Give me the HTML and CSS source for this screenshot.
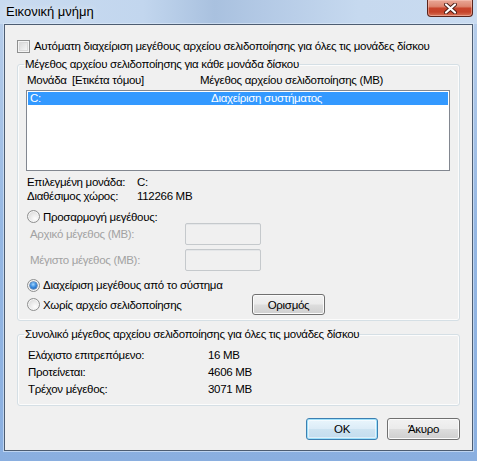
FILE: index.html
```html
<!DOCTYPE html>
<html lang="el">
<head>
<meta charset="utf-8">
<title>Εικονική μνήμη</title>
<link rel="stylesheet" href="styles.css">
</head>
<body>
<div class="window">
  <div class="titlebar">
    <span class="title">Εικονική μνήμη</span>
    <span class="close" aria-label="Κλείσιμο">
      <svg width="13" height="11" viewBox="0 0 13 11">
        <path d="M2 1.5 L11 9.5 M11 1.5 L2 9.5" stroke="#4a1c14" stroke-width="4" stroke-linecap="round" fill="none"/>
        <path d="M2 1.5 L11 9.5 M11 1.5 L2 9.5" stroke="#ffffff" stroke-width="2.2" stroke-linecap="round" fill="none"/>
      </svg>
    </span>
  </div>
  <div class="client">
    <div class="check-row"><span class="checkbox"></span><span>Αυτόματη διαχείριση μεγέθους αρχείου σελιδοποίησης για όλες τις μονάδες δίσκου</span></div>

    <fieldset class="group group-drives">
      <legend>Μέγεθος αρχείου σελιδοποίησης για κάθε μονάδα δίσκου</legend>
      <div class="list-header">
        <span class="col-drive">Μονάδα</span><span class="col-label">[Ετικέτα τόμου]</span><span>Μέγεθος αρχείου σελιδοποίησης (MB)</span>
      </div>
      <div class="listbox">
        <div class="list-row selected"><span class="cell-drive">C:</span><span>Διαχείριση συστήματος</span></div>
      </div>
      <div class="info-row info-first"><span class="info-key">Επιλεγμένη μονάδα:</span><span>C:</span></div>
      <div class="info-row"><span class="info-key">Διαθέσιμος χώρος:</span><span>112266 MB</span></div>

      <div class="radio-row radio-custom"><span class="radio"></span><span>Προσαρμογή μεγέθους:</span></div>
      <div class="size-row size-initial"><span class="size-label disabled">Αρχικό μέγεθος (MB):</span><span class="textbox"></span></div>
      <div class="size-row size-max"><span class="size-label disabled">Μέγιστο μέγεθος (MB):</span><span class="textbox"></span></div>

      <div class="radio-row radio-system"><span class="radio checked"><span class="dot"></span></span><span>Διαχείριση μεγέθους από το σύστημα</span></div>
      <div class="radio-row radio-none">
        <div class="radio-label"><span class="radio"></span><span>Χωρίς αρχείο σελιδοποίησης</span></div>
        <span class="btn btn-set">Ορισμός</span>
      </div>
    </fieldset>

    <fieldset class="group group-total">
      <legend>Συνολικό μέγεθος αρχείου σελιδοποίησης για όλες τις μονάδες δίσκου</legend>
      <div class="total-row total-first"><span class="total-key">Ελάχιστο επιτρεπόμενο:</span><span>16 MB</span></div>
      <div class="total-row"><span class="total-key">Προτείνεται:</span><span>4606 MB</span></div>
      <div class="total-row"><span class="total-key">Τρέχον μέγεθος:</span><span>3071 MB</span></div>
    </fieldset>

    <div class="dialog-buttons">
      <span class="btn btn-default btn-ok">OK</span>
      <span class="btn btn-cancel">Άκυρο</span>
    </div>
  </div>
</div>
</body>
</html>
```

FILE: styles.css
```css
* { box-sizing: border-box; }

html, body {
  margin: 0;
  padding: 0;
  background: #ffffff;
}

body {
  font-family: "Liberation Sans", Arial, sans-serif;
  font-size: 11.5px;
  letter-spacing: -0.3px;
  color: #000;
}

.window {
  width: 477px;
  height: 461px;
  display: flex;
  flex-direction: column;
  background: linear-gradient(to bottom, #c7daf0 0px, #b6cdea 24px, #95b7e3 50%, #8aafe0 100%);
}

.titlebar {
  height: 24px;
  flex: 0 0 24px;
  display: flex;
  align-items: flex-start;
  background: linear-gradient(to right, #c9dbf0 0%, #c2d6ee 30%, #a9c1df 45%, #b3c9e5 55%, #c6d9ef 75%, #c9dbf0 100%);
}

.title {
  margin: 4px 0 0 6px;
  font-size: 13px;
  letter-spacing: 0;
  line-height: 15px;
  color: #000;
  text-shadow: 0 0 6px rgba(255,255,255,0.9);
}

.close {
  margin-left: auto;
  margin-right: 4px;
  width: 46px;
  height: 17px;
  display: flex;
  align-items: center;
  justify-content: center;
  border: 1px solid #5a241b;
  border-top: none;
  border-radius: 0 0 4px 4px;
  background: linear-gradient(to bottom, #e9a796 0%, #dd8670 40%, #c8452c 52%, #c5432a 75%, #d8765a 100%);
  box-shadow: inset 0 0 0 1px rgba(255,210,200,0.45);
}

.client {
  flex: 1;
  margin: 0 4px 10px 4px;
  border: 1px solid #4d5d72;
  background: #f0f0f0;
  padding: 0 12px;
  box-shadow: 0 0 0 1px rgba(225,236,250,0.6);
}

.check-row {
  margin-top: 15px;
  display: flex;
  align-items: center;
  gap: 4px;
  line-height: 13px;
  height: 13px;
  white-space: nowrap;
}

.checkbox {
  width: 13px;
  height: 13px;
  flex: 0 0 13px;
  border: 1px solid #8e8f8f;
  background: linear-gradient(135deg, #d2d2d2 0%, #f0f0f0 70%, #fbfbfb 100%);
  box-shadow: inset 0 0 0 1px #f4f4f4, inset 0 0 0 2px #dadada;
}

.group {
  margin: 0;
  padding: 0 6px 5px 6px;
  border: 1px solid #d5dfe5;
  border-radius: 3px;
  min-width: 0;
  box-shadow: inset 0 0 0 1px #fcfcfc;
}

.group legend {
  padding: 0 1px;
  line-height: 14px;
  white-space: nowrap;
}

.group-drives { margin-top: 4px; }

.list-header {
  margin-top: 2px;
  padding-left: 3px;
  line-height: 14px;
  display: flex;
  white-space: nowrap;
}

.col-drive { width: 45px; flex: 0 0 45px; }
.col-label { width: 128px; flex: 0 0 128px; }

.listbox {
  margin: 3px 0 0 2px;
  width: 424px;
  height: 81px;
  border: 1px solid #828790;
  background: #fff;
  padding: 1px;
}

.list-row {
  height: 13px;
  line-height: 13px;
  padding-left: 2px;
  display: flex;
  white-space: nowrap;
}

.list-row.selected {
  background: #3399ff;
  color: #fff;
}

.cell-drive { width: 181px; flex: 0 0 181px; }

.info-row {
  padding-left: 3px;
  line-height: 14px;
  display: flex;
  white-space: nowrap;
}
.info-first { margin-top: 4px; }
.info-key { width: 110px; flex: 0 0 110px; }

.radio-row {
  display: flex;
  align-items: center;
  gap: 3px;
  padding-left: 3px;
  line-height: 14px;
  white-space: nowrap;
}

.radio-custom { margin-top: 7px; height: 13px; }
.radio-system { margin-top: 7px; height: 14px; }
.radio-none { margin-top: 2px; height: 21px; gap: 0; }

.radio-label {
  display: flex;
  align-items: center;
  gap: 3px;
  width: 225px;
  flex: 0 0 225px;
}

.radio {
  width: 13px;
  height: 13px;
  flex: 0 0 13px;
  border-radius: 50%;
  border: 1px solid #8e8f8f;
  background: radial-gradient(circle at 65% 70%, #fdfdfd 0%, #eaeaea 45%, #cfcfcf 100%);
  box-shadow: inset 0 0 0 1px #f6f6f6;
  display: grid;
  place-items: center;
}

.radio.checked {
  background: radial-gradient(circle at 60% 65%, #ffffff 0%, #ececec 55%, #d6d6d6 100%);
}

.dot {
  width: 7px;
  height: 7px;
  border-radius: 50%;
  background: radial-gradient(circle at 45% 35%, #a6d8ff 0%, #3d8ee0 45%, #0d4ea6 100%);
  box-shadow: 0 0 0 0.5px #1a4f8f;
}

.size-row {
  display: flex;
  align-items: center;
  padding-left: 6px;
  height: 22px;
  white-space: nowrap;
}
.size-initial { margin-top: 0; }
.size-max { margin-top: 4px; }

.size-label { width: 155px; flex: 0 0 155px; }
.disabled { color: #a2a2a2; }

.textbox {
  width: 76px;
  height: 22px;
  border: 1px solid #c5c9cc;
  border-radius: 2px;
  background: #f0f0f0;
  box-shadow: inset 0 1px 0 #e4e6e8;
}

.btn {
  display: flex;
  align-items: center;
  justify-content: center;
  height: 21px;
  border: 1px solid #707070;
  border-radius: 3px;
  background: linear-gradient(to bottom, #f2f2f2 0%, #ebebeb 48%, #dddddd 52%, #cfcfcf 100%);
  box-shadow: inset 0 0 0 1px #fbfbfb;
  color: #000;
  white-space: nowrap;
}

.btn-set { width: 73px; }

.group-total { margin-top: 6px; padding-bottom: 7px; }

.total-row {
  display: flex;
  padding-left: 4px;
  line-height: 17px;
  white-space: nowrap;
}
.total-first { margin-top: 6px; }
.total-key { width: 180px; flex: 0 0 180px; }

.dialog-buttons {
  margin-top: 12px;
  display: flex;
  justify-content: flex-end;
  gap: 9px;
}

.dialog-buttons .btn { height: 22px; }
.btn-ok { width: 72px; }
.btn-cancel { width: 73px; }

.btn-default {
  border-color: #3c7fb1;
  background: linear-gradient(to bottom, #eaf6fd 0%, #dcecf7 48%, #cde3f1 52%, #c2dcee 100%);
  box-shadow: inset 0 0 0 1px #9fe1fb, inset 0 0 0 2px rgba(255,255,255,0.5);
}
```
